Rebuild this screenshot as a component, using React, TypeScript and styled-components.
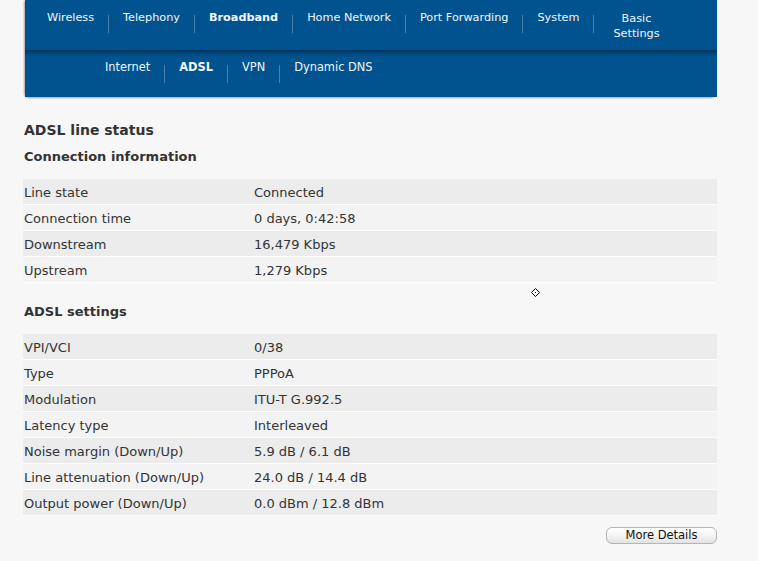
import React, { Fragment } from 'react'
import styled, { createGlobalStyle } from 'styled-components'

const topItems = [
  { label: 'Wireless' },
  { label: 'Telephony' },
  { label: 'Broadband', active: true },
  { label: 'Home Network' },
  { label: 'Port Forwarding' },
  { label: 'System' },
  { label: 'Basic Settings', wrap: true },
]

const subItems = [
  { label: 'Internet' },
  { label: 'ADSL', active: true },
  { label: 'VPN' },
  { label: 'Dynamic DNS' },
]

const connectionInfo = [
  ['Line state', 'Connected'],
  ['Connection time', '0 days, 0:42:58'],
  ['Downstream', '16,479 Kbps'],
  ['Upstream', '1,279 Kbps'],
]

const adslSettings = [
  ['VPI/VCI', '0/38'],
  ['Type', 'PPPoA'],
  ['Modulation', 'ITU-T G.992.5'],
  ['Latency type', 'Interleaved'],
  ['Noise margin (Down/Up)', '5.9 dB / 6.1 dB'],
  ['Line attenuation (Down/Up)', '24.0 dB / 14.4 dB'],
  ['Output power (Down/Up)', '0.0 dBm / 12.8 dBm'],
]

const InfoTable = ({ rows }: { rows: string[][] }) => (
  <Table>
    <tbody>
      {rows.map(([label, value], i) => (
        <tr key={i}>
          <LabelCell>{label}</LabelCell>
          <td>{value}</td>
        </tr>
      ))}
    </tbody>
  </Table>
)

const App = () => {
  return (
    <Fragment>
      <GlobalStyle />
      <Page>
        <Header>
          <TopNav>
            {topItems.map((item, i) => (
              <Fragment key={item.label}>
                {i > 0 && <Sep />}
                <TopItem active={item.active} wrap={item.wrap}>
                  {item.wrap ? (
                    <Fragment>
                      Basic
                      <br />
                      Settings
                    </Fragment>
                  ) : (
                    item.label
                  )}
                </TopItem>
              </Fragment>
            ))}
          </TopNav>
          <SubNav>
            {subItems.map((item, i) => (
              <Fragment key={item.label}>
                {i > 0 && <Sep />}
                <SubItem active={item.active}>{item.label}</SubItem>
              </Fragment>
            ))}
          </SubNav>
        </Header>

        <Content>
          <Title>ADSL line status</Title>
          <SubTitle>Connection information</SubTitle>
          <InfoTable rows={connectionInfo} />
          <SubTitle spaced>ADSL settings</SubTitle>
          <InfoTable rows={adslSettings} />
          <Actions>
            <Button>More Details</Button>
          </Actions>
        </Content>

        <Cursor width="9" height="9" viewBox="0 0 9 9">
          <path
            d="M4.5 0.5 L8.5 4.5 L4.5 8.5 L0.5 4.5 Z"
            fill="#fff"
            stroke="#000"
            strokeWidth="1"
          />
          <rect x="4" y="4" width="1" height="1" fill="#000" />
        </Cursor>
      </Page>
    </Fragment>
  )
}

export default App

const GlobalStyle = createGlobalStyle`
  html, body {
    margin: 0;
    padding: 0;
    background: #ffffff;
  }
  body {
    font-family: "DejaVu Sans", Verdana, sans-serif;
  }
`

const Page = styled.div`
  position: relative;
  width: 758px;
  height: 561px;
  background: #f7f7f7;
  overflow: hidden;
`

const Header = styled.div`
  margin-left: 25px;
  width: 692px;
  height: 97px;
  background: #00538f;
  border-radius: 0 0 5px 5px;
  box-shadow: -1px 1px 2px rgba(0, 0, 0, 0.35);
  display: flex;
  flex-direction: column;
`

const TopNav = styled.div`
  display: flex;
  height: 50px;
  padding-left: 8px;
`

const SubNav = styled.div`
  display: flex;
  flex: 1;
  padding-left: 66px;
  background: linear-gradient(#00315a 0, #00457c 3px, #00538f 7px);
`

const Sep = styled.span`
  width: 1px;
  height: 18px;
  margin-top: 15px;
  background: #4b7fae;
`

const TopItem = styled.div<{ active?: boolean; wrap?: boolean }>`
  padding: 10px 14px 0;
  font-size: 11.25px;
  line-height: 15px;
  color: #f2f6fa;
  font-weight: ${(p) => (p.active ? 'bold' : 'normal')};
  text-align: ${(p) => (p.wrap ? 'center' : 'left')};
  padding-top: ${(p) => (p.wrap ? '11px' : '10px')};
  padding-left: ${(p) => (p.wrap ? '19px' : '14px')};
  white-space: nowrap;
`

const SubItem = styled.div<{ active?: boolean }>`
  padding: 10px 14px 0;
  font-size: 11.4px;
  line-height: 15px;
  color: #f2f6fa;
  font-weight: ${(p) => (p.active ? 'bold' : 'normal')};
  white-space: nowrap;
`

const Content = styled.div`
  padding: 24px 41px 0 23px;
  color: #333;
`

const Title = styled.h2`
  margin: 0;
  font-size: 14px;
  line-height: 18px;
  font-weight: bold;
  padding-left: 1px;
`

const SubTitle = styled.h3<{ spaced?: boolean }>`
  margin: ${(p) => (p.spaced ? '21px' : '10px')} 0 14px;
  font-size: 13px;
  line-height: 16px;
  font-weight: bold;
  padding-left: 1px;
`

const Table = styled.table`
  width: 694px;
  border-collapse: separate;
  border-spacing: 0;
  font-size: 13px;
  color: #333;

  td {
    height: 23px;
    padding: 2px 1px 0;
    line-height: 23px;
    border-bottom: 1px solid #fdfdfd;
    white-space: nowrap;
  }
  tr:nth-child(odd) td {
    background: #ececec;
  }
  tr:nth-child(even) td {
    background: #f3f3f3;
  }
`

const LabelCell = styled.td`
  width: 228px;
`

const Actions = styled.div`
  display: flex;
  justify-content: flex-end;
  margin-top: 11px;
`

const Button = styled.button`
  width: 111px;
  height: 17px;
  padding: 0;
  border: 1px solid #b4b4b4;
  border-radius: 6px;
  background: linear-gradient(#ffffff 0%, #f4f4f4 50%, #e2e2e2 100%);
  font-family: "DejaVu Sans", Verdana, sans-serif;
  font-size: 11.5px;
  line-height: 15px;
  color: #111;
  cursor: pointer;
`

const Cursor = styled.svg`
  position: absolute;
  left: 531px;
  top: 288px;
`
